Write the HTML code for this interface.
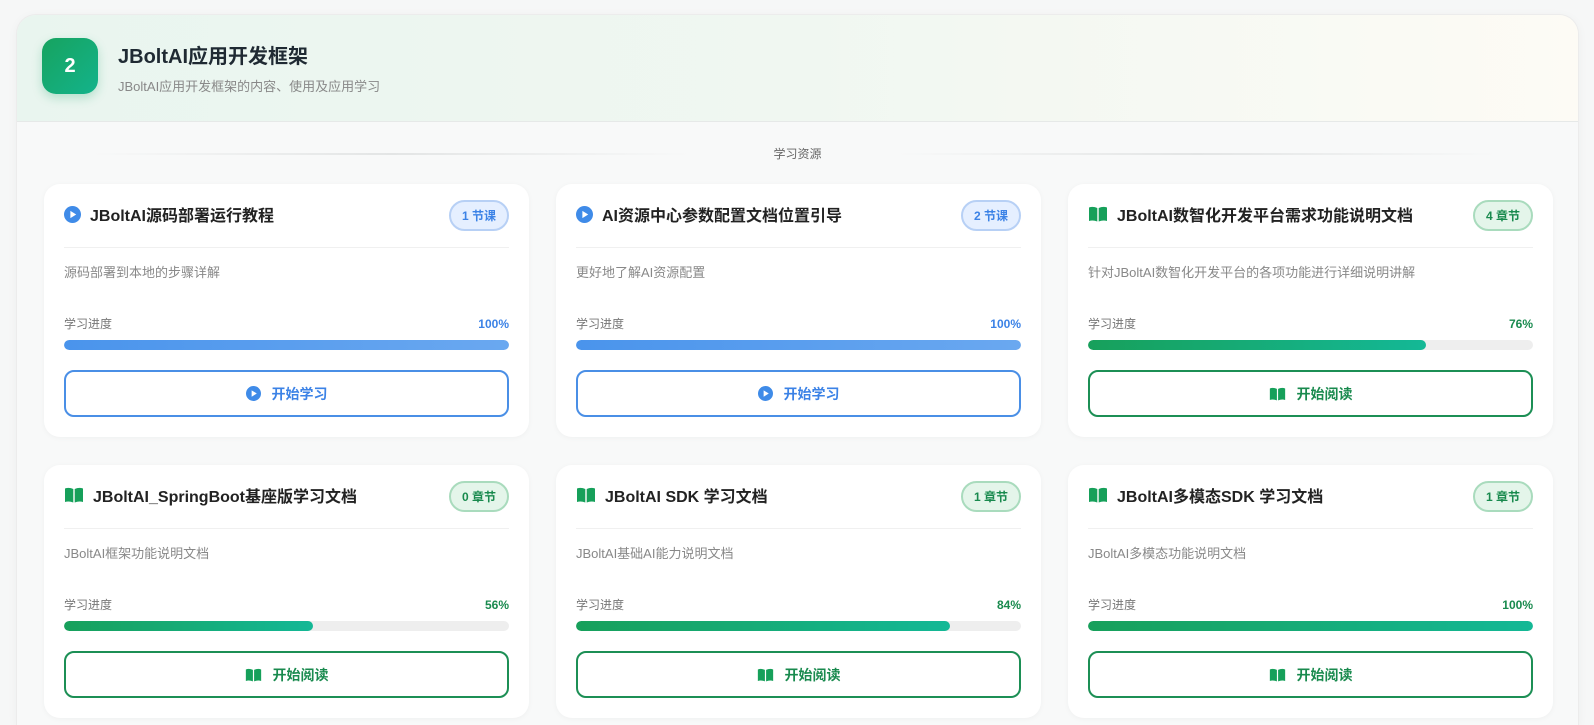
<!DOCTYPE html>
<html style="width:1594px;height:725px;overflow:hidden"><head><meta charset="utf-8"><style>
*{box-sizing:border-box;margin:0;padding:0}
body{width:1594px;height:725px;overflow:hidden;position:relative;background:#f6f7f7;font-family:"Liberation Sans","Noto Sans CJK SC",sans-serif;}
.panel{position:absolute;left:16px;top:14px;width:1563px;height:711px;border-radius:20px 20px 0 0;background:#f8f9f9;border:1px solid #ececec;border-bottom:none;overflow:hidden;box-shadow:0 2px 10px rgba(0,0,0,.04)}
.hd{height:107px;background:linear-gradient(90deg,#e9f5ef 0%,#f0f7f1 50%,#fdfbf5 100%);border-bottom:1px solid #e6e9e8;position:relative}
.num{position:absolute;left:25px;top:23px;width:56px;height:56px;border-radius:14px;background:linear-gradient(135deg,#16a35f,#14b38b);color:#fff;font-weight:bold;font-size:20px;display:flex;align-items:center;justify-content:center;box-shadow:0 4px 10px rgba(20,160,100,.25)}
.t{position:absolute;left:101px;top:25px;font-size:20px;font-weight:bold;color:#1f2a33}
.st{position:absolute;left:101px;top:61px;font-size:13px;color:#888}
.sep{position:absolute;top:132px;left:0;width:100%;font-size:12px;line-height:14px;color:#666;text-align:center}
.sep:before,.sep:after{content:"";position:absolute;top:6px;height:2px;width:600px;background:linear-gradient(90deg,transparent,#e3e5e5,transparent)}
.sep:before{left:74px}.sep:after{left:880px}
.card{position:absolute;width:485px;height:253px;background:#fff;border-radius:16px;box-shadow:0 1px 6px rgba(0,0,0,.04)}
.ct{position:absolute;left:20px;top:20px;right:20px;height:20px;display:flex;align-items:center;font-size:16px;font-weight:bold;color:#222}
.ct svg{margin-right:9px;flex:none}
.bd{position:absolute;right:20px;top:16px;height:31px;padding:0 11px;border-radius:16px;font-size:12px;font-weight:bold;display:flex;align-items:center}
.bd.b{background:#e5efff;border:2px solid #b7d0f5;color:#3b82e6}
.bd.g{background:#e4f5ea;border:2px solid #a9dbbd;color:#198a4e}
.dv{position:absolute;left:20px;right:20px;top:63px;height:1px;background:#f0f0f0}
.ds{position:absolute;left:20px;top:78px;font-size:13px;color:#888}
.lb{position:absolute;left:20px;right:20px;top:131px;font-size:12px;color:#777;display:flex;justify-content:space-between;align-items:baseline}
.lb b{font-size:12px}
.bar{position:absolute;left:20px;right:20px;top:156px;height:10px;border-radius:5px;background:#eeeeee;overflow:hidden}
.bar i{display:block;height:100%;border-radius:5px}
.blu i{background:linear-gradient(90deg,#4a94ec,#6aa8f0)}
.grn i{background:linear-gradient(90deg,#17a05b,#14b896)}
.btn{position:absolute;left:20px;right:20px;top:186px;height:47px;border-radius:10px;border:2px solid;display:flex;align-items:center;justify-content:center;font-size:14px;font-weight:bold}
.btn svg{margin-right:11px}
.btn.b{border-color:#4a8fe6;color:#3b82e6}
.btn.g{border-color:#1c8f55;color:#198a4e}
</style></head><body>
<div class="panel">
<div class="hd"><div class="num">2</div><div class="t">JBoltAI应用开发框架</div><div class="st">JBoltAI应用开发框架的内容、使用及应用学习</div></div>
<div class="sep">学习资源</div>
</div>
<svg width="0" height="0" style="position:absolute"><defs>
<symbol id="play" viewBox="0 0 16 16"><circle cx="8" cy="8" r="8" fill="#3f8be8"/><path d="M6 4.6L11.5 8 6 11.4z" fill="#fff"/></symbol>
<symbol id="book" viewBox="0 0 20 16"><path d="M1 1.5Q5 0 9.3 2V15.5Q5 13.8 1 15z" fill="#16a05a"/><path d="M19 1.5Q15 0 10.7 2V15.5Q15 13.8 19 15z" fill="#16a05a"/></symbol>
</defs></svg>

<div class="card" style="left:44px;top:184px">
<div class="ct"><svg width="17" height="17"><use href="#play"/></svg>JBoltAI源码部署运行教程</div><div class="bd b">1 节课</div><div class="dv"></div>
<div class="ds">源码部署到本地的步骤详解</div><div class="lb"><span>学习进度</span><b style="color:#3b82e6">100%</b></div>
<div class="bar blu"><i style="width:100%"></i></div><div class="btn b"><svg width="15" height="15"><use href="#play"/></svg>开始学习</div></div>

<div class="card" style="left:556px;top:184px">
<div class="ct"><svg width="17" height="17"><use href="#play"/></svg>AI资源中心参数配置文档位置引导</div><div class="bd b">2 节课</div><div class="dv"></div>
<div class="ds">更好地了解AI资源配置</div><div class="lb"><span>学习进度</span><b style="color:#3b82e6">100%</b></div>
<div class="bar blu"><i style="width:100%"></i></div><div class="btn b"><svg width="15" height="15"><use href="#play"/></svg>开始学习</div></div>

<div class="card" style="left:1068px;top:184px">
<div class="ct"><svg width="20" height="16"><use href="#book"/></svg>JBoltAI数智化开发平台需求功能说明文档</div><div class="bd g">4 章节</div><div class="dv"></div>
<div class="ds">针对JBoltAI数智化开发平台的各项功能进行详细说明讲解</div><div class="lb"><span>学习进度</span><b style="color:#198a4e">76%</b></div>
<div class="bar grn"><i style="width:76%"></i></div><div class="btn g"><svg width="17" height="14" viewBox="0 0 20 16"><use href="#book"/></svg>开始阅读</div></div>

<div class="card" style="left:44px;top:465px">
<div class="ct"><svg width="20" height="16"><use href="#book"/></svg>JBoltAI_SpringBoot基座版学习文档</div><div class="bd g">0 章节</div><div class="dv"></div>
<div class="ds">JBoltAI框架功能说明文档</div><div class="lb"><span>学习进度</span><b style="color:#198a4e">56%</b></div>
<div class="bar grn"><i style="width:56%"></i></div><div class="btn g"><svg width="17" height="14" viewBox="0 0 20 16"><use href="#book"/></svg>开始阅读</div></div>

<div class="card" style="left:556px;top:465px">
<div class="ct"><svg width="20" height="16"><use href="#book"/></svg>JBoltAI SDK 学习文档</div><div class="bd g">1 章节</div><div class="dv"></div>
<div class="ds">JBoltAI基础AI能力说明文档</div><div class="lb"><span>学习进度</span><b style="color:#198a4e">84%</b></div>
<div class="bar grn"><i style="width:84%"></i></div><div class="btn g"><svg width="17" height="14" viewBox="0 0 20 16"><use href="#book"/></svg>开始阅读</div></div>

<div class="card" style="left:1068px;top:465px">
<div class="ct"><svg width="20" height="16"><use href="#book"/></svg>JBoltAI多模态SDK 学习文档</div><div class="bd g">1 章节</div><div class="dv"></div>
<div class="ds">JBoltAI多模态功能说明文档</div><div class="lb"><span>学习进度</span><b style="color:#198a4e">100%</b></div>
<div class="bar grn"><i style="width:100%"></i></div><div class="btn g"><svg width="17" height="14" viewBox="0 0 20 16"><use href="#book"/></svg>开始阅读</div></div>
</body></html>
